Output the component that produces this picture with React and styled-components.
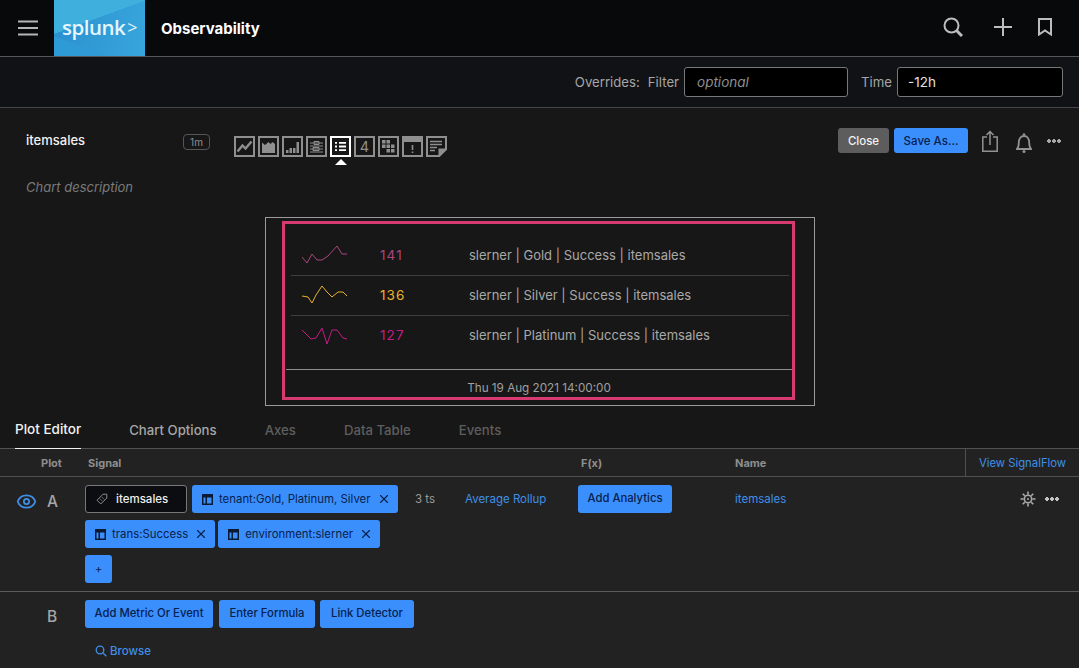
import React from 'react';
import styled, {createGlobalStyle} from 'styled-components';
import {Eye, X} from 'lucide-react';

const GlobalStyle = createGlobalStyle`
  html, body {
    margin: 0;
    padding: 0;
    background: #222222;
    height: 100%;
    overflow: hidden;
  }
  * {
    box-sizing: border-box;
  }
  body {
    font-family: Inter, "Liberation Sans", sans-serif;
    font-size: 12px;
    color: #c4c4c4;
  }
`;

const Page = styled.div`
  width: 1079px;
  height: 668px;
  display: flex;
  flex-direction: column;
  overflow: hidden;
`;

const TopBar = styled.header`
  height: 57px;
  flex: none;
  display: flex;
  align-items: stretch;
  background: #08090b;
  border-bottom: 1px solid #55565a;
`;

const Burger = styled.div`
  width: 54px;
  display: flex;
  align-items: center;
  padding-left: 18px;
  color: #b5b5b5;
`;

const Logo = styled.div`
  width: 91px;
  display: flex;
  align-items: center;
  justify-content: center;
  padding-bottom: 3px;
  color: #e6f6fc;
  font-family: "Open Sans", sans-serif;
  font-size: 20.5px;
  font-weight: 600;
  letter-spacing: -0.5px;
  background:
    linear-gradient(160deg, #3fb0de 0 38%, transparent 38%),
    linear-gradient(20deg, #2f9bd6 0 22%, transparent 22%),
    linear-gradient(100deg, #2c8fce, #37a6dc);
`;

const Caret = styled.span`
  font-size: 18px;
  font-weight: 400;
  margin-left: 2px;
`;

const Product = styled.div`
  display: flex;
  align-items: center;
  margin-left: 16px;
  color: #fff;
  font-size: 15px;
  font-weight: 700;
  flex: 1;
`;

const TopIcons = styled.div`
  display: flex;
  align-items: center;
  padding-bottom: 2px;
  padding-right: 27px;
  color: #bdbdbd;
`;

const TopIcon = styled.svg`
  display: block;
  margin-left: ${p => p.$left || 0}px;
`;

const OverridesBar = styled.div`
  height: 51px;
  flex: none;
  display: flex;
  align-items: center;
  justify-content: flex-end;
  padding: 0 16px 1px 0;
  background: #111216;
  border-bottom: 1px solid #45464a;
  font-size: 13.2px;
  color: #a5a5a5;
`;

const OverrideLabel = styled.span`
  margin-right: ${p => p.$gap}px;
`;

const TextBox = styled.div`
  width: ${p => p.$width}px;
  height: 30px;
  display: flex;
  align-items: center;
  padding-left: ${p => (p.$muted ? 12 : 10)}px;
  margin-right: ${p => p.$after}px;
  background: #000;
  border: 1px solid #77787b;
  border-radius: 3px;
  font-size: 13.5px;
  color: ${p => (p.$muted ? '#8f8f8f' : '#e2e2e2')};
  font-style: ${p => (p.$muted ? 'italic' : 'normal')};
`;

const ChartArea = styled.section`
  height: 302px;
  flex: none;
  display: flex;
  flex-direction: column;
  background: #171717;
`;

const ChartHead = styled.div`
  height: 60px;
  flex: none;
  display: flex;
  align-items: flex-start;
  padding: 24px 18px 0 26px;
`;

const ChartTitle = styled.div`
  width: 157px;
  color: #f2f2f2;
  font-size: 13px;
  font-weight: 500;
`;

const Resolution = styled.div`
  width: 27px;
  height: 16px;
  margin-top: 2px;
  display: flex;
  align-items: center;
  justify-content: center;
  border: 1px solid #555;
  border-radius: 4px;
  font-size: 10px;
  color: #8f8f8f;
`;

const ChartTypes = styled.div`
  display: flex;
  gap: 3px;
  margin-left: 24px;
  margin-top: 4px;
  flex: 1;
`;

const ChartType = styled.div`
  position: relative;
  width: 21px;
  height: 21px;
  color: ${p => (p.$active ? '#fff' : '#8f8f8f')};

  svg {
    display: block;
  }

  ${p => p.$active && `
    &::after {
      content: '';
      position: absolute;
      left: 5px;
      top: 23px;
      border-left: 6px solid transparent;
      border-right: 6px solid transparent;
      border-bottom: 6px solid #fff;
    }
  `}
`;

const HeadActions = styled.div`
  display: flex;
  align-items: center;
  height: 25px;
  margin-top: -4px;
  color: #929292;
`;

const SmallButton = styled.button`
  height: 25px;
  padding: 0;
  width: ${p => p.$width}px;
  margin-right: ${p => p.$after}px;
  border: 0;
  border-radius: 3px;
  font: 500 11.5px Inter, sans-serif;
  color: ${p => (p.$primary ? '#07214d' : '#f0f0f0')};
  background: ${p => (p.$primary ? '#3b8ffd' : '#5d5d5d')};
`;

const HeadIcon = styled.svg`
  display: block;
  flex: none;
  margin-left: ${p => p.$left || 0}px;
  margin-top: ${p => p.$top || 0}px;
`;

const Dots = styled.span`
  width: 14px;
  height: 4px;
  display: block;
  margin-left: ${p => p.$left || 0}px;
  background: radial-gradient(circle at 2px 2px, ${p => p.$color} 1.6px, transparent 1.9px) 0 0 / 5px 4px repeat-x;
`;

const Description = styled.div`
  padding-left: 26px;
  height: 38px;
  font-size: 13px;
  font-style: italic;
  color: #7a7a7a;
  margin-top: 11px;
`;

const ChartFrame = styled.div`
  width: 550px;
  height: 189px;
  margin-left: 265px;
  padding: 3px 19px 5px 16px;
  border: 1px solid #9a9a9a;
`;

const Highlight = styled.div`
  height: 100%;
  display: flex;
  flex-direction: column;
  border: 3px solid #d73a70;
`;

const ListRows = styled.div`
  flex: 1;
  padding: 12px 3px 0 6px;
`;

const ListRow = styled.div`
  height: 40px;
  display: flex;
  align-items: center;
  padding: 0 0 2px 11px;
  border-bottom: ${p => (p.$last ? 0 : '1px solid #3f3f3f')};
`;

const Spark = styled.svg`
  width: 46px;
  height: 20px;
  flex: none;
  margin-top: 1px;
`;

const Value = styled.div`
  width: 89px;
  margin-left: 32px;
  font-size: 13.5px;
  letter-spacing: 1.1px;
  color: ${p => p.$color};
`;

const Series = styled.div`
  font-size: 13px;
  color: #a9a9a9;
`;

const Timestamp = styled.div`
  height: 28px;
  flex: none;
  display: flex;
  align-items: center;
  justify-content: center;
  padding-top: 8px;
  border-top: 1px solid #8d8d8d;
  margin-left: 1px;
  font-size: 11.7px;
  color: #a0a0a0;
`;

const Tabs = styled.nav`
  height: 39px;
  flex: none;
  display: flex;
  gap: 48px;
  padding-left: 15px;
  background: #171717;
  border-bottom: 1px solid #515151;
`;

const Tab = styled.div`
  height: 39px;
  padding-top: ${p => (p.$active ? 11 : 12)}px;
  font-size: ${p => (p.$active ? 13.5 : 13.2)}px;
  font-weight: 500;
  color: ${p => (p.$active ? '#f2f2f2' : p.$disabled ? '#5e5e5e' : '#a6a6a6')};
  border-bottom: ${p => (p.$active ? '1px solid #f2f2f2' : '0')};
`;

const Editor = styled.section`
  flex: 1;
  background: #222222;
`;

const Columns = 'grid-template-columns: 85px 330px 50px 113px 157px 1fr;';

const TableHead = styled.div`
  height: 28px;
  display: grid;
  ${Columns}
  align-items: center;
  border-bottom: 1px solid #505050;
  font-size: 11px;
  font-weight: 700;
  color: #8e8e8e;
`;

const HeadCell = styled.div`
  padding-left: ${p => p.$pad || 0}px;
  grid-column: ${p => p.$span || 'auto'};
`;

const NameHead = styled.div`
  display: flex;
  align-items: center;
  justify-content: space-between;
`;

const SignalFlow = styled.div`
  width: 114px;
  height: 27px;
  display: flex;
  align-items: center;
  justify-content: center;
  border-left: 1px solid #505050;
  font-size: 11.3px;
  font-weight: 400;
  color: #3f8fe8;
`;

const PlotRow = styled.div`
  height: 115px;
  display: grid;
  ${Columns}
  padding-top: 8px;
  border-bottom: 1px solid #5c5c5c;
`;

const PlotId = styled.div`
  display: flex;
  align-items: flex-start;
  padding: 7px 0 0 ${p => (p.$eye ? 16 : 47)}px;
  gap: 10px;
  font-size: 15.5px;
  font-weight: 500;
  color: #a5a5a5;

  svg {
    margin-top: -1px;
    color: #3f8fe8;
  }
`;

const Chips = styled.div`
  display: flex;
  flex-wrap: wrap;
  align-content: flex-start;
  gap: 7px 3px;
  padding-right: 10px;
`;

const Metric = styled.div`
  width: 102px;
  height: 28px;
  margin-right: 2px;
  display: flex;
  align-items: center;
  gap: 8px;
  padding-left: 10px;
  background: #0c0d10;
  border: 1px solid #77787b;
  border-radius: 3px;
  font-size: 11.5px;
  font-weight: 500;
  color: #efefef;
`;

const Chip = styled.div`
  height: 28px;
  display: flex;
  align-items: center;
  gap: 6px;
  padding: 0 7px 0 10px;
  background: #3b8ffd;
  border-radius: 3px;
  font-size: 11.4px;
  color: #07214d;
`;

const AddChip = styled(Chip)`
  width: 27px;
  padding: 0;
  justify-content: center;
`;

const Cell = styled.div`
  height: 28px;
  display: flex;
  align-items: center;
  font-size: 11.5px;
  color: ${p => (p.$link ? '#3f8fe8' : '#9a9a9a')};
`;

const ActionButton = styled.button`
  height: 28px;
  width: ${p => p.$width}px;
  padding: 0 0 2px;
  margin-right: ${p => p.$after || 0}px;
  border: 0;
  border-radius: 3px;
  background: #3b8ffd;
  font: 500 11.3px Inter, sans-serif;
  color: #07214d;
`;

const NameCell = styled.div`
  height: 28px;
  display: flex;
  align-items: center;
  justify-content: space-between;
`;

const RowTools = styled.div`
  display: flex;
  align-items: center;
  gap: 9px;
  padding-right: 20px;
  color: #aaa;
`;

const AddRow = styled.div`
  display: grid;
  grid-template-columns: 85px 1fr;
  padding-top: 8px;
`;

const AddButtons = styled.div`
  display: flex;
`;

const Browse = styled.div`
  display: flex;
  align-items: center;
  gap: 3px;
  margin: 16px 0 0 10px;
  font-size: 11.5px;
  font-weight: 500;
  color: #3f8fe8;
`;

const TableIcon = () => (
  <svg width="11" height="11" viewBox="0 0 11 11">
    <path fill="#0b1a33" fillRule="evenodd" d="M0 0h11v11H0z M1.500 3.500v6H3.500v-6z M5 3.500v6h4.500v-6z"/>
  </svg>
);

const TagIcon = () => (
  <svg width="12" height="12" viewBox="0 0 12 12" fill="none" stroke="#8a8a8a">
    <path d="M1 7.200 7 1.200h3.800V5l-6 6z"/>
    <path d="M3.600 5.400l3 3M5.400 3.600l3 3" strokeWidth=".7"/>
  </svg>
);

const Gear = () => (
  <svg width="16" height="16" viewBox="0 0 16 16" fill="none" stroke="currentColor">
    <circle cx="8" cy="8" r="3.700" strokeWidth="1.600"/>
    <circle cx="8" cy="8" r="1" fill="currentColor" stroke="none"/>
    <path strokeWidth="1.600" d="M8 .5v3M8 12.500v3M.5 8h3M12.500 8h3M2.700 2.700l2.100 2.100M11.200 11.200l2.100 2.100M2.700 13.300l2.100-2.100M11.200 4.800l2.100-2.100"/>
  </svg>
);

const frame = <rect x="1" y="1" width="19" height="19" fill="none" stroke="currentColor" strokeWidth="2"/>;

const chartTypes = [
  <>{frame}<path d="M3.500 15.500l5-6 3 3 6-7" fill="none" stroke="currentColor" strokeWidth="2.400"/></>,
  <>{frame}<path d="M4 17V6.500l3 2.500 3.500-3 2 2 2-2 2.500 2v9z" fill="currentColor"/></>,
  <>{frame}<path d="M4 17v-3h2.500v3zM7.500 17v-5H10v5zM11 17v-5h2.500v5zM14.500 17V6H17v11z" fill="currentColor"/></>,
  <>{frame}<path d="M4 7h13M4 10h13M4 13h13M4 16h13M8 5.500h5v3H8zM7 11.500h6v3H7z" fill="none" stroke="currentColor" strokeWidth="1"/></>,
  <>{frame}<path d="M5 6h2v1.800H5zM9 6h7v1.800H9zM5 9.600h2v1.800H5zM9 9.600h7v1.800H9zM5 13.200h2V15H5zM9 13.200h7V15H9z" fill="currentColor"/></>,
  <>{frame}<text x="10.500" y="16" textAnchor="middle" fontSize="14.500" fontFamily="Inter, sans-serif" fill="currentColor">4</text></>,
  <>{frame}<path d="M4 4h3.500v3.500H4zM8.500 4H12v3.500H8.500zM8.500 8.500H12V12H8.500zM13 8.500h3.500V12H13zM4 8.500h3.500V12H4zM8.500 13H12v3.500H8.500zM13 13h3.500v3.500H13z" fill="currentColor"/></>,
  <>{frame}<path d="M1 1h19v5H1zM9.700 9h1.600v5H9.700zM9.700 15.500h1.600V17H9.700z" fill="currentColor"/></>,
  <>
    <path d="M1 1h19v12l-7 7H1z" fill="none" stroke="currentColor" strokeWidth="2"/>
    <path d="M21 12.500v1L13.500 21h-1v-8.500z" fill="currentColor"/>
    <path d="M4 5.500h12M4 8.500h12M4 11.500h7M4 14.500h5" fill="none" stroke="currentColor" strokeWidth="1.500"/>
  </>,
];

const sparkRows = [
  {color: '#a9467f', value: 141, name: 'slerner | Gold | Success | itemsales', points: '0,12 5,18 10,9 15,15 20,15 26,11 35,1 40,9 45,9'},
  {color: '#e8b32c', value: 136, name: 'slerner | Silver | Success | itemsales', points: '0,11 6,12 10,18 14,10 20,1 25,7 30,12 36,7 41,7 45,11'},
  {color: '#c21c85', value: 127, name: 'slerner | Platinum | Success | itemsales', points: '0,4 9,13 14,12 20,2 25,18 30,4 35,4 41,12 45,13'},
];

const App = () => {
  return (
    <Page>
      <GlobalStyle/>
      <TopBar>
        <Burger>
          <svg width="20" height="16" viewBox="0 0 20 16">
            <path d="M0 1.500h20M0 8h20M0 14.500h20" stroke="currentColor" strokeWidth="2.200"/>
          </svg>
        </Burger>
        <Logo>splunk<Caret>&gt;</Caret></Logo>
        <Product>Observability</Product>
        <TopIcons>
          <TopIcon width="20" height="20" viewBox="0 0 20 20" fill="none" stroke="currentColor">
            <circle cx="8.500" cy="8.500" r="7" strokeWidth="2"/>
            <path d="M13.500 13.500l5.500 5.500" strokeWidth="3"/>
          </TopIcon>
          <TopIcon $left={31} width="18" height="18" viewBox="0 0 18 18" stroke="currentColor" strokeWidth="2">
            <path d="M9 0v18M0 9h18"/>
          </TopIcon>
          <TopIcon $left={26} width="14" height="18" viewBox="0 0 14 18" fill="none" stroke="currentColor" strokeWidth="2">
            <path d="M1 1h12v15.500l-6-4-6 4z"/>
          </TopIcon>
        </TopIcons>
      </TopBar>

      <OverridesBar>
        <OverrideLabel $gap={8}>Overrides:</OverrideLabel>
        <OverrideLabel $gap={5}>Filter</OverrideLabel>
        <TextBox $width={164} $after={13} $muted>optional</TextBox>
        <OverrideLabel $gap={5}>Time</OverrideLabel>
        <TextBox $width={166} $after={0}>-12h</TextBox>
      </OverridesBar>

      <ChartArea>
        <ChartHead>
          <ChartTitle>itemsales</ChartTitle>
          <Resolution>1m</Resolution>
          <ChartTypes>
            {chartTypes.map((shape, i) => (
              <ChartType key={i} $active={i === 4}>
                <svg width="21" height="21" viewBox="0 0 21 21">{shape}</svg>
              </ChartType>
            ))}
          </ChartTypes>
          <HeadActions>
            <SmallButton $width={51} $after={5}>Close</SmallButton>
            <SmallButton $width={74} $after={0} $primary>Save As...</SmallButton>
            <HeadIcon $left={14} width="16" height="22" viewBox="0 0 16 22" fill="none" stroke="currentColor" strokeWidth="1.500">
              <path d="M5 7H.8v14.200h14.400V7H11"/>
              <path d="M8 15V1.500M4.500 5 8 1.500 11.500 5"/>
            </HeadIcon>
            <HeadIcon $left={18} $top={4} width="16" height="20" viewBox="0 0 16 20" fill="none" stroke="currentColor">
              <path strokeWidth="1.800" d="M1 16c1.500-1.500 1.800-3 1.800-6.500C2.800 5.500 5 3 8 3s5.200 2.500 5.200 6.500c0 3.500.3 5 1.800 6.500z"/>
              <circle cx="8" cy="1.500" r="1.300" fill="currentColor" stroke="none"/>
              <circle cx="8" cy="18.500" r="1.500" fill="currentColor" stroke="none"/>
            </HeadIcon>
            <Dots $color="#a8a8a8" $left={15}/>
          </HeadActions>
        </ChartHead>
        <Description>Chart description</Description>
        <ChartFrame>
          <Highlight>
            <ListRows>
              {sparkRows.map((row, i) => (
                <ListRow key={row.value} $last={i === sparkRows.length - 1}>
                  <Spark viewBox="0 0 46 20">
                    <polyline points={row.points} fill="none" stroke={row.color} strokeWidth="1"/>
                  </Spark>
                  <Value $color={row.color}>{row.value}</Value>
                  <Series>{row.name}</Series>
                </ListRow>
              ))}
            </ListRows>
            <Timestamp>Thu 19 Aug 2021 14:00:00</Timestamp>
          </Highlight>
        </ChartFrame>
      </ChartArea>

      <Tabs>
        <Tab $active>Plot Editor</Tab>
        <Tab>Chart Options</Tab>
        <Tab $disabled>Axes</Tab>
        <Tab $disabled>Data Table</Tab>
        <Tab $disabled>Events</Tab>
      </Tabs>

      <Editor>
        <TableHead>
          <HeadCell $pad={41}>Plot</HeadCell>
          <HeadCell $pad={3} $span="2 / 5">Signal</HeadCell>
          <HeadCell $pad={3}>F(x)</HeadCell>
          <NameHead>
            Name
            <SignalFlow>View SignalFlow</SignalFlow>
          </NameHead>
        </TableHead>

        <PlotRow>
          <PlotId $eye>
            <Eye size={21} strokeWidth={2}/>
            A
          </PlotId>
          <Chips>
            <Metric><TagIcon/>itemsales</Metric>
            <Chip><TableIcon/>tenant:Gold, Platinum, Silver<X size={14}/></Chip>
            <Chip><TableIcon/>trans:Success<X size={14}/></Chip>
            <Chip><TableIcon/>environment:slerner<X size={14}/></Chip>
            <AddChip>+</AddChip>
          </Chips>
          <Cell>3 ts</Cell>
          <Cell $link>Average Rollup</Cell>
          <div><ActionButton $width={94}>Add Analytics</ActionButton></div>
          <NameCell>
            <Cell $link>itemsales</Cell>
            <RowTools>
              <Gear/>
              <Dots $color="#c4c4c4"/>
            </RowTools>
          </NameCell>
        </PlotRow>

        <AddRow>
          <PlotId>B</PlotId>
          <div>
            <AddButtons>
              <ActionButton $width={128} $after={6}>Add Metric Or Event</ActionButton>
              <ActionButton $width={96} $after={5}>Enter Formula</ActionButton>
              <ActionButton $width={94}>Link Detector</ActionButton>
            </AddButtons>
            <Browse>
              <svg width="12" height="12" viewBox="0 0 12 12" fill="none" stroke="currentColor" strokeWidth="1.300">
                <circle cx="5" cy="5" r="3.800"/>
                <path d="M8 8l3.300 3.300"/>
              </svg>
              Browse
            </Browse>
          </div>
        </AddRow>
      </Editor>
    </Page>
  );
};

export default App;
